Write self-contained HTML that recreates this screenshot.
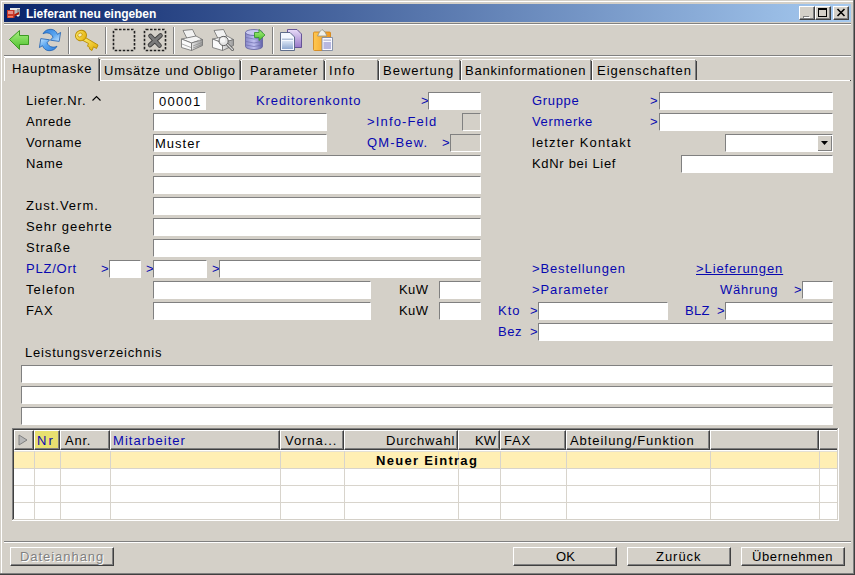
<!DOCTYPE html>
<html><head><meta charset="utf-8"><style>
html,body{margin:0;padding:0;width:855px;height:575px;overflow:hidden;background:#D4D0C8}
#w{position:relative;width:855px;height:575px;overflow:hidden}
#w div{position:absolute;box-sizing:content-box}
#w .t{font-family:"Liberation Sans",sans-serif;line-height:13px;white-space:nowrap}
</style></head><body><div id="w">
<div style="left:0px;top:0px;width:855px;height:575px;background:#D4D0C8;"></div>
<div style="left:1px;top:1px;width:852px;height:1px;background:#fff;"></div>
<div style="left:1px;top:1px;width:1px;height:572px;background:#fff;"></div>
<div style="left:853px;top:0px;width:1px;height:574px;background:#808080;"></div>
<div style="left:0px;top:573px;width:854px;height:1px;background:#808080;"></div>
<div style="left:854px;top:0px;width:1px;height:575px;background:#404040;"></div>
<div style="left:0px;top:574px;width:855px;height:1px;background:#404040;"></div>
<div style="left:4px;top:4px;width:847px;height:18px;background:linear-gradient(to right,#0A246A,#A6CAF0)"></div>
<svg style="position:absolute;left:0;top:0" width="24" height="22" viewBox="0 0 24 22">
<rect x="10" y="8" width="10" height="8" fill="#B8B8B8"/><rect x="10" y="8" width="10" height="2" fill="#E8E8E8"/><rect x="17" y="9" width="3" height="7" fill="#989898"/>
<path d="M13 15 L19 12 L19 14 L15 16.5 Z" fill="#B01808"/><rect x="17" y="15" width="2" height="1.5" fill="#F0F0F0"/>
<rect x="7" y="10" width="7.5" height="8" fill="#C83828"/><rect x="8" y="11" width="5" height="3" fill="#E89088"/>
<rect x="8" y="16" width="5" height="1.5" fill="#FF8060"/></svg>
<div class="t" style="left:26px;top:7px;color:#fff;font-size:12px;letter-spacing:-0.05px;font-weight:bold;top:8px">Lieferant neu eingeben</div>
<div style="left:799px;top:6px;width:14px;height:12px;background:#D4D0C8;border-top:1px solid #fff;border-left:1px solid #fff;border-right:1px solid #404040;border-bottom:1px solid #404040;box-shadow:inset -1px -1px 0 #808080"></div>
<div style="left:815px;top:6px;width:14px;height:12px;background:#D4D0C8;border-top:1px solid #fff;border-left:1px solid #fff;border-right:1px solid #404040;border-bottom:1px solid #404040;box-shadow:inset -1px -1px 0 #808080"></div>
<div style="left:833px;top:6px;width:14px;height:12px;background:#D4D0C8;border-top:1px solid #fff;border-left:1px solid #fff;border-right:1px solid #404040;border-bottom:1px solid #404040;box-shadow:inset -1px -1px 0 #808080"></div>
<div style="left:803px;top:16px;width:6px;height:2px;background:#808080;"></div>
<div style="left:804px;top:17px;width:6px;height:1px;background:#fff;"></div>
<div style="left:818px;top:8px;width:7px;height:6px;border:1px solid #000;border-top-width:2px"></div>
<svg style="position:absolute;left:836px;top:8px" width="10" height="9" viewBox="0 0 10 9"><path d="M1.5 1 L8.5 8 M8.5 1 L1.5 8" stroke="#000" stroke-width="1.6"/></svg>
<div style="left:4px;top:23px;width:847px;height:1px;background:#808080;"></div>
<div style="left:4px;top:24px;width:847px;height:1px;background:#fff;"></div>
<svg style="position:absolute;left:0;top:0" width="340" height="56" viewBox="0 0 340 56">
<defs>
<linearGradient id="gA" x1="0" y1="0" x2="0" y2="1"><stop offset="0" stop-color="#A8F080"/><stop offset="1" stop-color="#4CBE2C"/></linearGradient>
<linearGradient id="gB" x1="0" y1="0" x2="1" y2="1"><stop offset="0" stop-color="#A8D4FF"/><stop offset="1" stop-color="#2A7FD8"/></linearGradient>
<linearGradient id="gK" x1="0" y1="0" x2="1" y2="1"><stop offset="0" stop-color="#FFF070"/><stop offset="1" stop-color="#E0A800"/></linearGradient>
<linearGradient id="gP" x1="0" y1="0" x2="0" y2="1"><stop offset="0" stop-color="#FAFAFA"/><stop offset="1" stop-color="#B8B8B8"/></linearGradient>
<linearGradient id="gD" x1="0" y1="0" x2="1" y2="0"><stop offset="0" stop-color="#8888C8"/><stop offset="0.5" stop-color="#C0C0F0"/><stop offset="1" stop-color="#6060A8"/></linearGradient>
<linearGradient id="gO" x1="0" y1="0" x2="1" y2="0"><stop offset="0" stop-color="#FFC850"/><stop offset="1" stop-color="#F09820"/></linearGradient>
<linearGradient id="gC1" x1="0" y1="0" x2="0" y2="1"><stop offset="0" stop-color="#D8E4F4"/><stop offset="1" stop-color="#8EA8D0"/></linearGradient>
<linearGradient id="gC2" x1="0" y1="0" x2="0" y2="1"><stop offset="0" stop-color="#E8DCF8"/><stop offset="1" stop-color="#9878C8"/></linearGradient>
</defs>
<!-- back arrow -->
<path d="M9.5 39.5 L19.5 30.5 L19.5 35.5 L28.5 35.5 L28.5 44.5 L19.5 44.5 L19.5 49.5 Z" fill="url(#gA)" stroke="#3C9A22" stroke-width="1" stroke-linejoin="round"/>
<!-- refresh -->
<linearGradient id="gR" x1="0" y1="0" x2="1" y2="1"><stop offset="0" stop-color="#2F7FDC"/><stop offset="0.55" stop-color="#5AA6F0"/><stop offset="1" stop-color="#C8E6FF"/></linearGradient>
<path id="rf" d="M43 33.8 C44.5 30.5 48 29.2 51 29.3 C54 29.4 56.3 31.2 57.5 34.3 L60.6 32.4 L59.2 41.4 L50.4 40.2 L53 37.2 C51.8 34.6 50 33.3 48 33 C46 32.7 44.3 33 43 33.8 Z" fill="url(#gR)" stroke="#1F5FB0" stroke-width="0.8" stroke-linejoin="round"/>
<use href="#rf" transform="rotate(180 50 40)"/>
<!-- key -->
<g stroke="#B88A00" stroke-width="0.9" stroke-linejoin="round">
<path d="M84.5 37 L98 45 L96.5 48.5 L93.5 46.8 L92 50.5 L89.5 49 L89.8 47.5 L87.5 46.2 L88.5 43.5 L83 40.5 Z" fill="url(#gK)"/>
<ellipse cx="81" cy="35.5" rx="5.6" ry="5.2" transform="rotate(-25 81 35.5)" fill="url(#gK)"/>
</g>
<ellipse cx="80" cy="35" rx="2.4" ry="1.8" transform="rotate(-30 80 35)" fill="#F4ECC0" stroke="#C09000" stroke-width="0.7"/>
<!-- dashed boxes -->
<rect x="113.5" y="29.5" width="21" height="21" rx="1.5" fill="none" stroke="#202020" stroke-width="1.6" stroke-dasharray="2.5 1.5"/>
<rect x="144.5" y="29.5" width="21" height="21" rx="1.5" fill="none" stroke="#202020" stroke-width="1.6" stroke-dasharray="2.5 1.5"/>
<path d="M150.5 36 L159.5 45.5 M160.5 35.5 L150 45" stroke="#404040" stroke-width="4.6" stroke-linecap="round"/>
<path d="M150.5 36 L159.5 45.5 M160.5 35.5 L150 45" stroke="#7A7A7A" stroke-width="2.8" stroke-linecap="round"/>
<!-- printer -->
<linearGradient id="gPR" x1="0" y1="0" x2="1" y2="0"><stop offset="0" stop-color="#E8E8E8"/><stop offset="1" stop-color="#9A9A9A"/></linearGradient>
<g id="prn" stroke="#6E6E6E" stroke-width="0.8" stroke-linejoin="round">
<path d="M183 30.5 L192.5 29.5 L196 36.5 L187 38.5 Z" fill="#F2F2F2"/>
<path d="M181.5 39 L196 36 L202.5 39.5 L191.5 43 Z" fill="#F4F4F4"/>
<path d="M181.5 39 L191.5 43 L191.5 50.5 L181.5 47.5 Z" fill="#FAFAFA"/>
<path d="M191.5 43 L202.5 39.5 L202.5 45.5 L191.5 50.5 Z" fill="url(#gPR)"/>
</g>
<path d="M182 44 L191 47.5 M193 46 L202 42.5 M193 48 L202 44.5" stroke="#8A8A8A" stroke-width="0.7" fill="none"/>
<ellipse cx="199" cy="40.5" rx="1.4" ry="0.7" fill="#A0A0A0"/>
<!-- preview -->
<use href="#prn" transform="translate(31 0)"/>
<path d="M222 46 L230 42.5" stroke="#8A8A8A" stroke-width="0.7" fill="none"/>
<path d="M227.5 44.5 L232.5 49.5" stroke="#5A5A5A" stroke-width="3" stroke-linecap="round"/>
<path d="M227.5 44.5 L232.5 49.5" stroke="#D8D8D8" stroke-width="1.4" stroke-linecap="round"/>
<circle cx="223.6" cy="41" r="4.6" fill="#E4E4E4" stroke="#5E5E5E" stroke-width="1"/>
<circle cx="222.6" cy="40" r="2.6" fill="#F6F6F6"/>
<!-- database -->
<path d="M245.5 32.5 L245.5 46.5 A8.5 3 0 0 0 262.5 46.5 L262.5 32.5 Z" fill="url(#gD)" stroke="#6060A0" stroke-width="0.8"/>
<ellipse cx="254" cy="32.5" rx="8.5" ry="3" fill="#C8C8F0" stroke="#6060A0" stroke-width="0.8"/>
<path d="M246 37.5 Q254 40.5 262 37.5 M246 41.5 Q254 44.5 262 41.5 M246 45 Q254 48 262 45" stroke="#7070B0" stroke-width="0.7" fill="none"/>
<path d="M254.5 32.5 L259 32.5 L259 29.5 L265 35 L259 40.5 L259 37.5 L254.5 37.5 Z" fill="url(#gA)" stroke="#30902A" stroke-width="0.8" stroke-linejoin="round"/>
<!-- copy -->
<path d="M287.5 29.5 L297 29.5 L301.5 34 L301.5 47.5 L287.5 47.5 Z" fill="url(#gC2)" stroke="#5A4890" stroke-width="0.9"/>
<path d="M280.5 32.5 L290 32.5 L294.5 37 L294.5 50.5 L280.5 50.5 Z" fill="#F4F8FF" stroke="#506080" stroke-width="0.9"/>
<rect x="282" y="41" width="11" height="8" fill="url(#gC1)"/>
<rect x="282" y="38.5" width="11" height="1.5" fill="#B0C0D8"/>
<!-- paste -->
<rect x="313.5" y="32" width="17" height="18.5" rx="1" fill="url(#gO)" stroke="#D08010" stroke-width="0.8"/>
<path d="M317.5 36 L319.5 32 L322 29.5 L325 32 L327 36 Z" fill="#F0F0E8" stroke="#909080" stroke-width="0.8"/>
<path d="M322 37.5 L332.5 37.5 L332.5 50.5 L322 50.5 Z" fill="#F8F8FF" stroke="#7080A0" stroke-width="0.8"/>
<rect x="323.5" y="42" width="7.5" height="7" fill="#B8B8E0"/>
<rect x="323.5" y="39.5" width="7.5" height="1.3" fill="#B8B8D0"/>
</svg>

<div style="left:68px;top:27px;width:1px;height:27px;background:#808080;"></div>
<div style="left:69px;top:27px;width:1px;height:27px;background:#fff;"></div>
<div style="left:105px;top:27px;width:1px;height:27px;background:#808080;"></div>
<div style="left:106px;top:27px;width:1px;height:27px;background:#fff;"></div>
<div style="left:173px;top:27px;width:1px;height:27px;background:#808080;"></div>
<div style="left:174px;top:27px;width:1px;height:27px;background:#fff;"></div>
<div style="left:272px;top:27px;width:1px;height:27px;background:#808080;"></div>
<div style="left:273px;top:27px;width:1px;height:27px;background:#fff;"></div>
<div style="left:4px;top:55px;width:847px;height:1px;background:#808080;"></div>
<div style="left:4px;top:56px;width:847px;height:1px;background:#fff;"></div>
<div style="left:4px;top:80px;width:846px;height:1px;background:#fff;"></div>
<div style="left:850px;top:80px;width:1px;height:1px;background:#404040;"></div>
<div style="left:4px;top:58px;width:96px;height:24px;background:#D4D0C8;"></div>
<div style="left:5px;top:57px;width:93px;height:1px;background:#fff;"></div>
<div style="left:4px;top:58px;width:1px;height:23px;background:#fff;"></div>
<div style="left:98px;top:58px;width:1px;height:23px;background:#808080;"></div>
<div style="left:99px;top:59px;width:1px;height:22px;background:#404040;"></div>
<div class="t" style="left:12px;top:62px;color:#000;font-size:13px;letter-spacing:0.72px;font-weight:normal;">Hauptmaske</div>
<div style="left:101px;top:59px;width:138px;height:1px;background:#fff;"></div>
<div style="left:100px;top:60px;width:1px;height:20px;background:#fff;"></div>
<div style="left:239px;top:60px;width:1px;height:20px;background:#808080;"></div>
<div style="left:240px;top:61px;width:1px;height:19px;background:#404040;"></div>
<div class="t" style="left:104px;top:64px;color:#000;font-size:13px;letter-spacing:0.78px;font-weight:normal;">Umsätze und Obligo</div>
<div style="left:242px;top:59px;width:81px;height:1px;background:#fff;"></div>
<div style="left:241px;top:60px;width:1px;height:20px;background:#fff;"></div>
<div style="left:323px;top:60px;width:1px;height:20px;background:#808080;"></div>
<div style="left:324px;top:61px;width:1px;height:19px;background:#404040;"></div>
<div class="t" style="left:250px;top:64px;color:#000;font-size:13px;letter-spacing:0.82px;font-weight:normal;">Parameter</div>
<div style="left:326px;top:59px;width:51px;height:1px;background:#fff;"></div>
<div style="left:325px;top:60px;width:1px;height:20px;background:#fff;"></div>
<div style="left:377px;top:60px;width:1px;height:20px;background:#808080;"></div>
<div style="left:378px;top:61px;width:1px;height:19px;background:#404040;"></div>
<div class="t" style="left:329px;top:64px;color:#000;font-size:13px;letter-spacing:1.3px;font-weight:normal;">Info</div>
<div style="left:380px;top:59px;width:79px;height:1px;background:#fff;"></div>
<div style="left:379px;top:60px;width:1px;height:20px;background:#fff;"></div>
<div style="left:459px;top:60px;width:1px;height:20px;background:#808080;"></div>
<div style="left:460px;top:61px;width:1px;height:19px;background:#404040;"></div>
<div class="t" style="left:383px;top:64px;color:#000;font-size:13px;letter-spacing:1.0px;font-weight:normal;">Bewertung</div>
<div style="left:462px;top:59px;width:128px;height:1px;background:#fff;"></div>
<div style="left:461px;top:60px;width:1px;height:20px;background:#fff;"></div>
<div style="left:590px;top:60px;width:1px;height:20px;background:#808080;"></div>
<div style="left:591px;top:61px;width:1px;height:19px;background:#404040;"></div>
<div class="t" style="left:465px;top:64px;color:#000;font-size:13px;letter-spacing:0.75px;font-weight:normal;">Bankinformationen</div>
<div style="left:593px;top:59px;width:102px;height:1px;background:#fff;"></div>
<div style="left:592px;top:60px;width:1px;height:20px;background:#fff;"></div>
<div style="left:695px;top:60px;width:1px;height:20px;background:#808080;"></div>
<div style="left:696px;top:61px;width:1px;height:19px;background:#404040;"></div>
<div class="t" style="left:597px;top:64px;color:#000;font-size:13px;letter-spacing:0.96px;font-weight:normal;">Eigenschaften</div>
<div class="t" style="left:26px;top:94px;color:#000;font-size:13px;letter-spacing:0.83px;font-weight:normal;">Liefer.Nr.</div>
<svg style="position:absolute;left:91px;top:95px" width="11" height="7" viewBox="0 0 11 7"><path d="M1.5 5.5 L5.5 1.5 L9.5 5.5" stroke="#000" stroke-width="1.1" fill="none"/></svg>
<div style="left:153px;top:92px;width:51px;height:16px;background:#fff;border-top:1px solid #808080;border-left:1px solid #808080;border-right:1px solid #fff;border-bottom:1px solid #fff"></div>
<div class="t" style="left:159px;top:95px;color:#000;font-size:13px;letter-spacing:1.3px;font-weight:normal;">00001</div>
<div class="t" style="left:256px;top:94px;color:#0808B0;font-size:13px;letter-spacing:0.91px;font-weight:normal;">Kreditorenkonto</div>
<div class="t" style="left:421px;top:94px;color:#0808B0;font-size:13px;letter-spacing:0px;font-weight:normal;">&gt;</div>
<div style="left:428px;top:92px;width:51px;height:16px;background:#fff;border-top:1px solid #808080;border-left:1px solid #808080;border-right:1px solid #fff;border-bottom:1px solid #fff"></div>
<div class="t" style="left:532px;top:94px;color:#0808B0;font-size:13px;letter-spacing:0.66px;font-weight:normal;">Gruppe</div>
<div class="t" style="left:650px;top:94px;color:#0808B0;font-size:13px;letter-spacing:0px;font-weight:normal;">&gt;</div>
<div style="left:659px;top:92px;width:172px;height:16px;background:#fff;border-top:1px solid #808080;border-left:1px solid #808080;border-right:1px solid #fff;border-bottom:1px solid #fff"></div>
<div class="t" style="left:26px;top:115px;color:#000;font-size:13px;letter-spacing:0.6px;font-weight:normal;">Anrede</div>
<div style="left:153px;top:113px;width:172px;height:16px;background:#fff;border-top:1px solid #808080;border-left:1px solid #808080;border-right:1px solid #fff;border-bottom:1px solid #fff"></div>
<div class="t" style="left:367px;top:115px;color:#0808B0;font-size:13px;letter-spacing:1.15px;font-weight:normal;">&gt;Info-Feld</div>
<div style="left:462px;top:113px;width:17px;height:16px;background:#D4D0C8;border-top:1px solid #808080;border-left:1px solid #808080;border-right:1px solid #fff;border-bottom:1px solid #fff"></div>
<div class="t" style="left:532px;top:115px;color:#0808B0;font-size:13px;letter-spacing:0.67px;font-weight:normal;">Vermerke</div>
<div class="t" style="left:650px;top:115px;color:#0808B0;font-size:13px;letter-spacing:0px;font-weight:normal;">&gt;</div>
<div style="left:659px;top:113px;width:172px;height:16px;background:#fff;border-top:1px solid #808080;border-left:1px solid #808080;border-right:1px solid #fff;border-bottom:1px solid #fff"></div>
<div class="t" style="left:26px;top:136px;color:#000;font-size:13px;letter-spacing:0.58px;font-weight:normal;">Vorname</div>
<div style="left:153px;top:134px;width:172px;height:16px;background:#fff;border-top:1px solid #808080;border-left:1px solid #808080;border-right:1px solid #fff;border-bottom:1px solid #fff"></div>
<div class="t" style="left:155px;top:137px;color:#000;font-size:13px;letter-spacing:1.0px;font-weight:normal;">Muster</div>
<div class="t" style="left:367px;top:136px;color:#0808B0;font-size:13px;letter-spacing:1.1px;font-weight:normal;">QM-Bew.</div>
<div class="t" style="left:442px;top:136px;color:#0808B0;font-size:13px;letter-spacing:0px;font-weight:normal;">&gt;</div>
<div style="left:450px;top:134px;width:29px;height:16px;background:#D4D0C8;border-top:1px solid #808080;border-left:1px solid #808080;border-right:1px solid #fff;border-bottom:1px solid #fff"></div>
<div class="t" style="left:532px;top:136px;color:#000;font-size:13px;letter-spacing:1.1px;font-weight:normal;">letzter Kontakt</div>
<div style="left:725px;top:134px;width:106px;height:16px;background:#fff;border-top:1px solid #808080;border-left:1px solid #808080;border-right:1px solid #fff;border-bottom:1px solid #fff"></div>
<div style="left:818px;top:136px;width:13px;height:14px;background:#D4D0C8;border-right:1px solid #808080;border-bottom:1px solid #808080"></div>
<svg style="position:absolute;left:821px;top:141px" width="8" height="5" viewBox="0 0 8 5"><path d="M0 0 H7 L3.5 4 Z" fill="#000"/></svg>
<div class="t" style="left:26px;top:157px;color:#000;font-size:13px;letter-spacing:0.67px;font-weight:normal;">Name</div>
<div style="left:153px;top:155px;width:326px;height:16px;background:#fff;border-top:1px solid #808080;border-left:1px solid #808080;border-right:1px solid #fff;border-bottom:1px solid #fff"></div>
<div class="t" style="left:532px;top:157px;color:#000;font-size:13px;letter-spacing:0.69px;font-weight:normal;">KdNr bei Lief</div>
<div style="left:681px;top:155px;width:150px;height:16px;background:#fff;border-top:1px solid #808080;border-left:1px solid #808080;border-right:1px solid #fff;border-bottom:1px solid #fff"></div>
<div style="left:153px;top:176px;width:326px;height:16px;background:#fff;border-top:1px solid #808080;border-left:1px solid #808080;border-right:1px solid #fff;border-bottom:1px solid #fff"></div>
<div class="t" style="left:26px;top:199px;color:#000;font-size:13px;letter-spacing:1.0px;font-weight:normal;">Zust.Verm.</div>
<div style="left:153px;top:197px;width:326px;height:16px;background:#fff;border-top:1px solid #808080;border-left:1px solid #808080;border-right:1px solid #fff;border-bottom:1px solid #fff"></div>
<div class="t" style="left:26px;top:220px;color:#000;font-size:13px;letter-spacing:0.95px;font-weight:normal;">Sehr geehrte</div>
<div style="left:153px;top:218px;width:326px;height:16px;background:#fff;border-top:1px solid #808080;border-left:1px solid #808080;border-right:1px solid #fff;border-bottom:1px solid #fff"></div>
<div class="t" style="left:26px;top:241px;color:#000;font-size:13px;letter-spacing:1.0px;font-weight:normal;">Straße</div>
<div style="left:153px;top:239px;width:326px;height:16px;background:#fff;border-top:1px solid #808080;border-left:1px solid #808080;border-right:1px solid #fff;border-bottom:1px solid #fff"></div>
<div class="t" style="left:26px;top:262px;color:#0808B0;font-size:13px;letter-spacing:0.78px;font-weight:normal;">PLZ/Ort</div>
<div class="t" style="left:101px;top:262px;color:#0808B0;font-size:13px;letter-spacing:0px;font-weight:normal;">&gt;</div>
<div style="left:109px;top:260px;width:30px;height:16px;background:#fff;border-top:1px solid #808080;border-left:1px solid #808080;border-right:1px solid #fff;border-bottom:1px solid #fff"></div>
<div class="t" style="left:146px;top:262px;color:#0808B0;font-size:13px;letter-spacing:0px;font-weight:normal;">&gt;</div>
<div style="left:153px;top:260px;width:52px;height:16px;background:#fff;border-top:1px solid #808080;border-left:1px solid #808080;border-right:1px solid #fff;border-bottom:1px solid #fff"></div>
<div class="t" style="left:212px;top:262px;color:#0808B0;font-size:13px;letter-spacing:0px;font-weight:normal;">&gt;</div>
<div style="left:219px;top:260px;width:260px;height:16px;background:#fff;border-top:1px solid #808080;border-left:1px solid #808080;border-right:1px solid #fff;border-bottom:1px solid #fff"></div>
<div class="t" style="left:532px;top:262px;color:#0808B0;font-size:13px;letter-spacing:0.86px;font-weight:normal;">&gt;Bestellungen</div>
<div class="t" style="left:696px;top:262px;color:#0808B0;font-size:13px;letter-spacing:0.91px;font-weight:normal;text-decoration:underline">&gt;Lieferungen</div>
<div class="t" style="left:26px;top:283px;color:#000;font-size:13px;letter-spacing:1.1px;font-weight:normal;">Telefon</div>
<div style="left:153px;top:281px;width:216px;height:16px;background:#fff;border-top:1px solid #808080;border-left:1px solid #808080;border-right:1px solid #fff;border-bottom:1px solid #fff"></div>
<div class="t" style="left:399px;top:283px;color:#000;font-size:13px;letter-spacing:0.4px;font-weight:normal;">KuW</div>
<div style="left:439px;top:281px;width:40px;height:16px;background:#fff;border-top:1px solid #808080;border-left:1px solid #808080;border-right:1px solid #fff;border-bottom:1px solid #fff"></div>
<div class="t" style="left:532px;top:283px;color:#0808B0;font-size:13px;letter-spacing:0.88px;font-weight:normal;">&gt;Parameter</div>
<div class="t" style="left:720px;top:283px;color:#0808B0;font-size:13px;letter-spacing:0.77px;font-weight:normal;">Währung</div>
<div class="t" style="left:794px;top:283px;color:#0808B0;font-size:13px;letter-spacing:0px;font-weight:normal;">&gt;</div>
<div style="left:802px;top:281px;width:29px;height:16px;background:#fff;border-top:1px solid #808080;border-left:1px solid #808080;border-right:1px solid #fff;border-bottom:1px solid #fff"></div>
<div class="t" style="left:26px;top:304px;color:#000;font-size:13px;letter-spacing:1.0px;font-weight:normal;">FAX</div>
<div style="left:153px;top:302px;width:216px;height:16px;background:#fff;border-top:1px solid #808080;border-left:1px solid #808080;border-right:1px solid #fff;border-bottom:1px solid #fff"></div>
<div class="t" style="left:399px;top:304px;color:#000;font-size:13px;letter-spacing:0.4px;font-weight:normal;">KuW</div>
<div style="left:439px;top:302px;width:40px;height:16px;background:#fff;border-top:1px solid #808080;border-left:1px solid #808080;border-right:1px solid #fff;border-bottom:1px solid #fff"></div>
<div class="t" style="left:498px;top:304px;color:#0808B0;font-size:13px;letter-spacing:1.0px;font-weight:normal;">Kto</div>
<div class="t" style="left:530px;top:304px;color:#0808B0;font-size:13px;letter-spacing:0px;font-weight:normal;">&gt;</div>
<div style="left:538px;top:302px;width:128px;height:16px;background:#fff;border-top:1px solid #808080;border-left:1px solid #808080;border-right:1px solid #fff;border-bottom:1px solid #fff"></div>
<div class="t" style="left:685px;top:304px;color:#0808B0;font-size:13px;letter-spacing:0.3px;font-weight:normal;">BLZ</div>
<div class="t" style="left:717px;top:304px;color:#0808B0;font-size:13px;letter-spacing:0px;font-weight:normal;">&gt;</div>
<div style="left:725px;top:302px;width:106px;height:16px;background:#fff;border-top:1px solid #808080;border-left:1px solid #808080;border-right:1px solid #fff;border-bottom:1px solid #fff"></div>
<div class="t" style="left:498px;top:325px;color:#0808B0;font-size:13px;letter-spacing:0.5px;font-weight:normal;">Bez</div>
<div class="t" style="left:530px;top:325px;color:#0808B0;font-size:13px;letter-spacing:0px;font-weight:normal;">&gt;</div>
<div style="left:538px;top:323px;width:293px;height:16px;background:#fff;border-top:1px solid #808080;border-left:1px solid #808080;border-right:1px solid #fff;border-bottom:1px solid #fff"></div>
<div class="t" style="left:25px;top:346px;color:#000;font-size:13px;letter-spacing:0.83px;font-weight:normal;">Leistungsverzeichnis</div>
<div style="left:21px;top:365px;width:810px;height:16px;background:#fff;border-top:1px solid #808080;border-left:1px solid #808080;border-right:1px solid #fff;border-bottom:1px solid #fff"></div>
<div style="left:21px;top:386px;width:810px;height:16px;background:#fff;border-top:1px solid #808080;border-left:1px solid #808080;border-right:1px solid #fff;border-bottom:1px solid #fff"></div>
<div style="left:21px;top:407px;width:810px;height:16px;background:#fff;border-top:1px solid #808080;border-left:1px solid #808080;border-right:1px solid #fff;border-bottom:1px solid #fff"></div>
<div style="left:12px;top:428px;width:827px;height:93px;background:#fff;"></div>
<div style="left:14px;top:450px;width:823px;height:1px;background:#fff;"></div>
<div style="left:14px;top:451px;width:823px;height:1px;background:#E4E0D4;"></div>
<div style="left:14px;top:452px;width:823px;height:16px;background:#FFEFB4;"></div>
<div style="left:14px;top:468px;width:823px;height:1px;background:#D8D4CC;"></div>
<div style="left:14px;top:485px;width:823px;height:1px;background:#D8D4CC;"></div>
<div style="left:14px;top:502px;width:823px;height:1px;background:#D8D4CC;"></div>
<div style="left:34px;top:451px;width:1px;height:68px;background:#D8D4CC;"></div>
<div style="left:60px;top:451px;width:1px;height:68px;background:#D8D4CC;"></div>
<div style="left:110px;top:451px;width:1px;height:68px;background:#D8D4CC;"></div>
<div style="left:280px;top:451px;width:1px;height:68px;background:#D8D4CC;"></div>
<div style="left:344px;top:451px;width:1px;height:68px;background:#D8D4CC;"></div>
<div style="left:458px;top:451px;width:1px;height:68px;background:#D8D4CC;"></div>
<div style="left:500px;top:451px;width:1px;height:68px;background:#D8D4CC;"></div>
<div style="left:566px;top:451px;width:1px;height:68px;background:#D8D4CC;"></div>
<div style="left:710px;top:451px;width:1px;height:68px;background:#D8D4CC;"></div>
<div style="left:819px;top:451px;width:1px;height:68px;background:#D8D4CC;"></div>
<div style="left:14px;top:430px;width:18px;height:18px;background:#D4D0C8;border-top:1px solid #fff;border-left:1px solid #fff;border-right:1px solid #404040;border-bottom:1px solid #404040;box-shadow:inset -1px -1px 0 #808080"></div>
<div style="left:34px;top:430px;width:24px;height:18px;background:#E8E070;border-top:1px solid #fff;border-left:1px solid #fff;border-right:1px solid #404040;border-bottom:1px solid #404040;box-shadow:inset -1px -1px 0 #808080"></div>
<div style="left:60px;top:430px;width:48px;height:18px;background:#D4D0C8;border-top:1px solid #fff;border-left:1px solid #fff;border-right:1px solid #404040;border-bottom:1px solid #404040;box-shadow:inset -1px -1px 0 #808080"></div>
<div style="left:110px;top:430px;width:168px;height:18px;background:#D4D0C8;border-top:1px solid #fff;border-left:1px solid #fff;border-right:1px solid #404040;border-bottom:1px solid #404040;box-shadow:inset -1px -1px 0 #808080"></div>
<div style="left:280px;top:430px;width:62px;height:18px;background:#D4D0C8;border-top:1px solid #fff;border-left:1px solid #fff;border-right:1px solid #404040;border-bottom:1px solid #404040;box-shadow:inset -1px -1px 0 #808080"></div>
<div style="left:344px;top:430px;width:112px;height:18px;background:#D4D0C8;border-top:1px solid #fff;border-left:1px solid #fff;border-right:1px solid #404040;border-bottom:1px solid #404040;box-shadow:inset -1px -1px 0 #808080"></div>
<div style="left:458px;top:430px;width:40px;height:18px;background:#D4D0C8;border-top:1px solid #fff;border-left:1px solid #fff;border-right:1px solid #404040;border-bottom:1px solid #404040;box-shadow:inset -1px -1px 0 #808080"></div>
<div style="left:500px;top:430px;width:64px;height:18px;background:#D4D0C8;border-top:1px solid #fff;border-left:1px solid #fff;border-right:1px solid #404040;border-bottom:1px solid #404040;box-shadow:inset -1px -1px 0 #808080"></div>
<div style="left:566px;top:430px;width:142px;height:18px;background:#D4D0C8;border-top:1px solid #fff;border-left:1px solid #fff;border-right:1px solid #404040;border-bottom:1px solid #404040;box-shadow:inset -1px -1px 0 #808080"></div>
<div style="left:710px;top:430px;width:107px;height:18px;background:#D4D0C8;border-top:1px solid #fff;border-left:1px solid #fff;border-right:1px solid #404040;border-bottom:1px solid #404040;box-shadow:inset -1px -1px 0 #808080"></div>
<div style="left:819px;top:430px;width:20px;height:18px;background:#D4D0C8;border-top:1px solid #fff;border-left:1px solid #fff;border-right:1px solid #404040;border-bottom:1px solid #404040;box-shadow:inset -1px -1px 0 #808080"></div>
<div style="left:12px;top:428px;width:826px;height:1px;background:#808080;"></div>
<div style="left:12px;top:428px;width:1px;height:92px;background:#808080;"></div>
<div style="left:13px;top:429px;width:824px;height:1px;background:#404040;"></div>
<div style="left:13px;top:429px;width:1px;height:90px;background:#404040;"></div>
<div style="left:13px;top:519px;width:825px;height:1px;background:#D4D0C8;"></div>
<div style="left:837px;top:429px;width:1px;height:91px;background:#D4D0C8;"></div>
<div style="left:12px;top:520px;width:827px;height:1px;background:#fff;"></div>
<div style="left:838px;top:428px;width:1px;height:93px;background:#fff;"></div>
<div style="left:839px;top:425px;width:3px;height:100px;background:#D4D0C8;"></div>
<svg style="position:absolute;left:18px;top:434px" width="10" height="12" viewBox="0 0 10 12"><path d="M1 1 L9 6 L1 11 Z" fill="#B8B8B8" stroke="#808080" stroke-width="1"/></svg>
<div class="t" style="left:37px;top:434px;color:#0808B0;font-size:13px;letter-spacing:2.0px;font-weight:normal;">Nr</div>
<div class="t" style="left:65px;top:434px;color:#000;font-size:13px;letter-spacing:0.77px;font-weight:normal;">Anr.</div>
<div class="t" style="left:113px;top:434px;color:#0808B0;font-size:13px;letter-spacing:1.05px;font-weight:normal;">Mitarbeiter</div>
<div class="t" style="left:285px;top:434px;color:#000;font-size:13px;letter-spacing:0.94px;font-weight:normal;">Vorna...</div>
<div class="t" style="left:386px;top:434px;color:#000;font-size:13px;letter-spacing:0.88px;font-weight:normal;">Durchwahl</div>
<div class="t" style="left:475px;top:434px;color:#000;font-size:13px;letter-spacing:0px;font-weight:normal;">KW</div>
<div class="t" style="left:504px;top:434px;color:#000;font-size:13px;letter-spacing:0.8px;font-weight:normal;">FAX</div>
<div class="t" style="left:570px;top:434px;color:#000;font-size:13px;letter-spacing:0.94px;font-weight:normal;">Abteilung/Funktion</div>
<div class="t" style="left:376px;top:454px;color:#000;font-size:13px;letter-spacing:1.3px;font-weight:bold;top:454px">Neuer Eintrag</div>
<div style="left:4px;top:541px;width:847px;height:1px;background:#808080;"></div>
<div style="left:4px;top:542px;width:847px;height:1px;background:#fff;"></div>
<div style="left:10px;top:547px;width:102px;height:17px;background:#D4D0C8;border-top:1px solid #fff;border-left:1px solid #fff;border-right:1px solid #404040;border-bottom:1px solid #404040;box-shadow:inset -1px -1px 0 #808080"></div>
<div class="t" style="left:20px;top:550px;color:#808080;font-size:13px;letter-spacing:0.95px;font-weight:normal;text-shadow:1px 1px 0 #fff">Dateianhang</div>
<div style="left:513px;top:547px;width:102px;height:17px;background:#D4D0C8;border-top:1px solid #fff;border-left:1px solid #fff;border-right:1px solid #404040;border-bottom:1px solid #404040;box-shadow:inset -1px -1px 0 #808080"></div>
<div class="t" style="left:556px;top:550px;color:#000;font-size:13px;letter-spacing:0.2px;font-weight:normal;">OK</div>
<div style="left:627px;top:547px;width:102px;height:17px;background:#D4D0C8;border-top:1px solid #fff;border-left:1px solid #fff;border-right:1px solid #404040;border-bottom:1px solid #404040;box-shadow:inset -1px -1px 0 #808080"></div>
<div class="t" style="left:656px;top:550px;color:#000;font-size:13px;letter-spacing:0.96px;font-weight:normal;">Zurück</div>
<div style="left:741px;top:547px;width:102px;height:17px;background:#D4D0C8;border-top:1px solid #fff;border-left:1px solid #fff;border-right:1px solid #404040;border-bottom:1px solid #404040;box-shadow:inset -1px -1px 0 #808080"></div>
<div class="t" style="left:752px;top:550px;color:#000;font-size:13px;letter-spacing:0.6px;font-weight:normal;">Übernehmen</div>
</div></body></html>
